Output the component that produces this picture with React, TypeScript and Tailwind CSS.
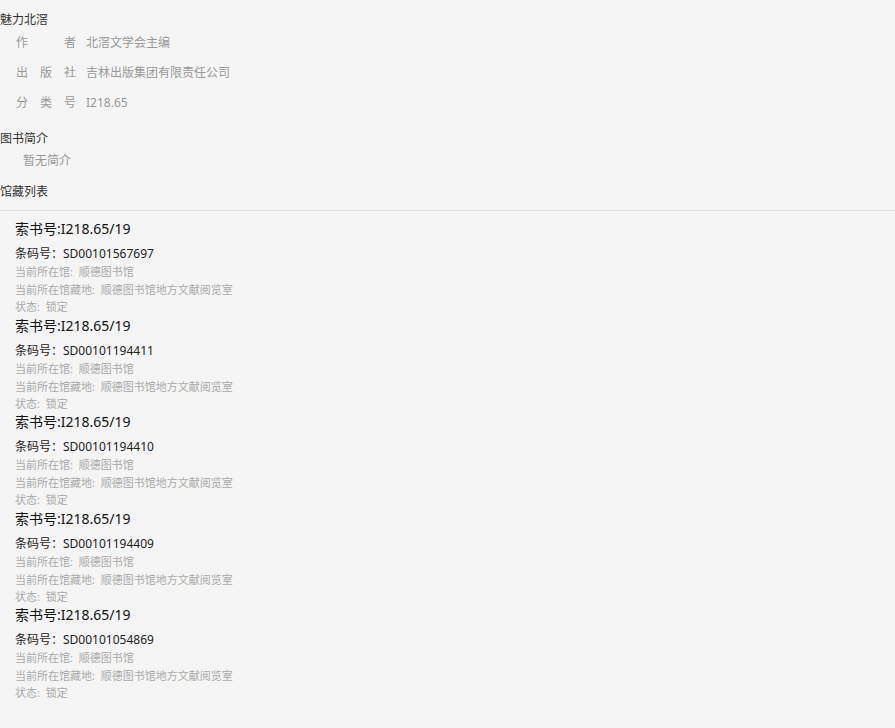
const info = [
  { label: "作者", value: "北滘文学会主编" },
  { label: "出版社", value: "吉林出版集团有限责任公司" },
  { label: "分类号", value: "I218.65" },
];

const holdings = [
  "SD00101567697",
  "SD00101194411",
  "SD00101194410",
  "SD00101194409",
  "SD00101054869",
];

export default function App() {
  return (
    <div
      className="min-h-screen bg-[#f5f5f5] text-[#333] pt-[10px]"
      style={{ fontFamily: '"Noto Sans", "Noto Sans CJK SC", sans-serif' }}
    >
      <h1 className="text-[12px] leading-[20px] font-normal">魅力北滘</h1>

      <div className="mt-[3px] flex flex-col gap-[10px] pl-[16px]">
        {info.map((row) => (
          <div key={row.label} className="flex text-[12px] leading-[20px] text-[#999]">
            <span className="w-[60px] [text-align-last:justify]">{row.label}</span>
            <span className="ml-[10px]">{row.value}</span>
          </div>
        ))}
      </div>

      <h2 className="mt-[16px] text-[12px] leading-[20px] font-normal">图书简介</h2>
      <p className="mt-[2px] pl-[23px] text-[12px] leading-[20px] text-[#999]">暂无简介</p>

      <h2 className="mt-[11px] text-[12px] leading-[20px] font-normal">馆藏列表</h2>
      <div className="mt-[8px] border-t border-[#e3e3e3] pt-[8px] pl-[15px]">
        {holdings.map((code, i) => (
          <div key={i}>
            <div className="text-[14px] leading-[20px] text-[#111]">索书号:I218.65/19</div>
            <div className="mt-[6px] text-[12px] leading-[18px] text-[#222]">
              条码号：SD{code.slice(2)}
            </div>
            <div className="text-[11px] leading-[18px] text-[#aaa]">
              当前所在馆:&nbsp;&nbsp;顺德图书馆
            </div>
            <div className="text-[11px] leading-[18px] text-[#aaa]">
              当前所在馆藏地:&nbsp;&nbsp;顺德图书馆地方文献阅览室
            </div>
            <div className="text-[11px] leading-[16.5px] text-[#aaa]">状态:&nbsp;&nbsp;锁定</div>
          </div>
        ))}
      </div>
    </div>
  );
}
